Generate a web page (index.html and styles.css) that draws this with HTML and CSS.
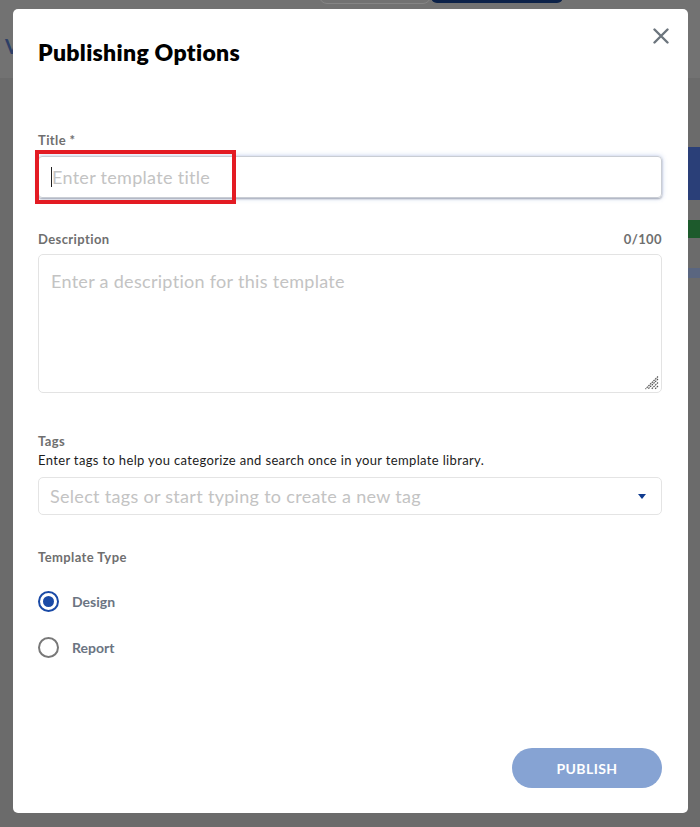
FILE: index.html
```html
<!DOCTYPE html>
<html lang="en">
<head>
    <meta charset="UTF-8">
    <meta name="viewport" content="width=device-width, initial-scale=1.0">
    <title>Publishing Options</title>
    <link rel="stylesheet" href="styles.css">
</head>
<body>
    <!-- page behind the dialog, already dimmed -->
    <div class="page">
        <div class="topbar">
            <span class="brand">V</span>
            <span class="btn_ghost"></span>
            <span class="btn_dark"></span>
        </div>
        <div class="side">
            <span class="side_blue"></span>
            <span class="side_green"></span>
            <span class="side_small"></span>
        </div>
    </div>

    <div class="modal">
        <h1 class="modal_title">Publishing Options</h1>
        <button class="close" aria-label="Close">
            <svg width="16" height="16" viewBox="0 0 16 16"><path d="M1.5 1.5 L14.5 14.5 M14.5 1.5 L1.5 14.5" stroke="#6c757d" stroke-width="2.4" stroke-linecap="round"/></svg>
        </button>

        <div class="field field_title">
            <label class="lbl">Title *</label>
            <div class="input focused">
                <span class="caret"></span>
                <span class="ph">Enter template title</span>
            </div>
        </div>

        <div class="field">
            <div class="lbl_row">
                <label class="lbl">Description</label>
                <span class="lbl">0/100</span>
            </div>
            <div class="textarea">
                <span class="ph">Enter a description for this template</span>
                <svg class="grip" width="14" height="14" viewBox="0 0 14 14"><path d="M13 3 L3 13 M13 6.5 L6.5 13 M13 10 L10 13 M13 0.5 L0.5 13" stroke="#555" stroke-width="1.2" stroke-dasharray="1.6 0.8"/></svg>
            </div>
        </div>

        <div class="field field_tags">
            <label class="lbl">Tags</label>
            <p class="help">Enter tags to help you categorize and search once in your template library.</p>
            <div class="select">
                <span class="ph">Select tags or start typing to create a new tag</span>
                <span class="arrow"></span>
            </div>
        </div>

        <div class="field field_type">
            <label class="lbl">Template Type</label>
            <div class="radios">
                <div class="radio checked"><span class="dot"></span><span class="radio_lbl">Design</span></div>
                <div class="radio"><span class="dot"></span><span class="radio_lbl">Report</span></div>
            </div>
        </div>

        <div class="footer">
            <button class="publish">PUBLISH</button>
        </div>

        <!-- red highlight drawn over the title input -->
        <span class="mark"></span>
    </div>
</body>
</html>
```

FILE: styles.css
```css
*{
    margin: 0;
    padding: 0;
    box-sizing: border-box;
}
body{
    width: 700px;
    height: 827px;
    overflow: hidden;
    background: #6b6b6b;
    font-family: Lato, "Open Sans", sans-serif;
}
.page{
    height: 827px;
}
.topbar{
    height: 78px;
    background: #727272;
    display: flex;
    align-items: flex-start;
}
.brand{
    margin: 34px 0 0 5px;
    font-size: 20px;
    font-weight: bold;
    color: #2d3f66;
}
.btn_ghost{
    margin: -36px 0 0 300px;
    width: 112px;
    height: 40px;
    border: 1px solid #858585;
    border-radius: 0 0 8px 8px;
}
.btn_dark{
    margin-top: -37px;
    width: 132px;
    height: 40px;
    background: #0b2148;
    border-radius: 0 0 6px 6px;
}
.side{
    display: flex;
    flex-direction: column;
    align-items: flex-end;
}
.side span{
    width: 14px;
}
.side_blue{
    margin-top: 69px;
    height: 53px;
    background: #2a3f78;
}
.side_green{
    margin-top: 20px;
    height: 18px;
    background: #1d5a2c;
}
.side_small{
    margin-top: 30px;
    height: 10px;
    background: #5a6680;
}

.modal{
    position: absolute;
    left: 13px;
    top: 9px;
    width: 675px;
    height: 804px;
    background: #fff;
    border-radius: 5px;
    padding: 29px 26px 25px 25px;
    display: flex;
    flex-direction: column;
}
.modal_title{
    font-size: 23px;
    line-height: 28px;
    font-weight: 800;
    letter-spacing: 0.3px;
    color: #000;
}
.close{
    position: absolute;
    top: 19px;
    right: 19px;
    border: 0;
    background: none;
    width: 16px;
    height: 16px;
    display: flex;
}

.lbl{
    display: block;
    font-size: 13px;
    line-height: 16px;
    font-weight: bold;
    letter-spacing: 0.4px;
    color: #6f6f6f;
}
.lbl_row{
    display: flex;
    justify-content: space-between;
}
.field{
    display: flex;
    flex-direction: column;
    margin-top: 33px;
}
.field_title{
    margin-top: 66px;
}
.field_tags{
    margin-top: 40px;
}
.field_type{
    margin-top: 34px;
}
.ph{
    font-size: 18px;
    letter-spacing: 0.3px;
    color: #c3c3c3;
    white-space: nowrap;
}
.input{
    margin-top: 8px;
    height: 42px;
    border: 1px solid #c9cdd4;
    border-radius: 4px;
    display: flex;
    align-items: center;
    padding-left: 12px;
}
.input.focused{
    box-shadow: 0 0 5px rgba(70, 105, 200, 0.35), 0 1px 2px rgba(0, 0, 0, 0.3);
}
.caret{
    width: 1px;
    height: 20px;
    background: #222;
}
.textarea{
    margin-top: 7px;
    height: 139px;
    border: 1px solid #e3e3e3;
    border-radius: 5px;
    padding: 15px 12px;
    position: relative;
}
.grip{
    position: absolute;
    right: 2px;
    bottom: 2px;
}
.help{
    margin-top: 3px;
    font-size: 13px;
    line-height: 16px;
    letter-spacing: 0.35px;
    color: #1c1c1c;
}
.select{
    margin-top: 9px;
    height: 38px;
    border: 1px solid #e4e4e4;
    border-radius: 5px;
    display: flex;
    align-items: center;
    justify-content: space-between;
    padding: 0 15px 0 11px;
}
.arrow{
    width: 0;
    height: 0;
    border-left: 4px solid transparent;
    border-right: 4px solid transparent;
    border-top: 5px solid #0f3b8f;
}
.radios{
    margin-top: 26px;
    display: flex;
    flex-direction: column;
    gap: 25px;
}
.radio{
    display: flex;
    align-items: center;
    gap: 13px;
}
.dot{
    width: 21px;
    height: 21px;
    border: 2px solid #787878;
    border-radius: 50%;
    display: flex;
    align-items: center;
    justify-content: center;
}
.radio.checked .dot{
    border-color: #1a4aa6;
}
.radio.checked .dot::after{
    content: "";
    width: 11px;
    height: 11px;
    border-radius: 50%;
    background: #1a4aa6;
}
.radio_lbl{
    font-size: 14px;
    font-weight: bold;
    color: #6b7482;
}
.footer{
    margin-top: auto;
    display: flex;
    justify-content: flex-end;
}
.publish{
    width: 150px;
    height: 40px;
    border: 0;
    border-radius: 20px;
    background: #86a3d3;
    color: #fff;
    font-family: Lato, "Open Sans", sans-serif;
    font-size: 14px;
    font-weight: bold;
    letter-spacing: 0.4px;
}
.mark{
    position: absolute;
    left: 22px;
    top: 141px;
    width: 201px;
    height: 54px;
    border: 4px solid #e31b23;
}
```
